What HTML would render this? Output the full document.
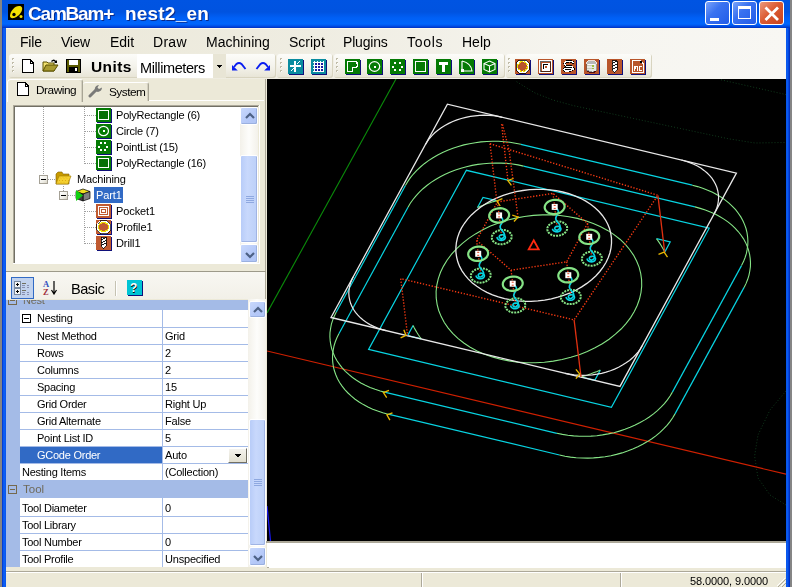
<!DOCTYPE html>
<html><head><meta charset="utf-8">
<style>
*{margin:0;padding:0;box-sizing:border-box}
html,body{width:792px;height:587px;overflow:hidden;background:#ece9d8;font-family:"Liberation Sans",sans-serif;position:relative}
.a{position:absolute}
.t{position:absolute;white-space:pre;line-height:1;color:#000;will-change:transform}
svg{shape-rendering:crispEdges}
</style></head><body>
<div class="a" style="left:0px;top:0px;width:2px;height:587px;background:#858585"></div>
<div class="a" style="left:2px;top:0px;width:4px;height:587px;background:linear-gradient(90deg,#0030c8,#0a5cf2 40%,#0b5ff6 70%,#0a52e6)"></div>
<div class="a" style="left:786px;top:0px;width:4px;height:587px;background:linear-gradient(90deg,#0a52e6,#0b5ff6 30%,#0038d0 80%,#0024a8)"></div>
<div class="a" style="left:790px;top:0px;width:2px;height:587px;background:#858585"></div>
<div class="a" style="left:2px;top:0px;width:788px;height:28px;background:linear-gradient(#0054e2 0,#0053e0 12px,#0060f6 18px,#0066fc 24px,#0050e8 26px,#0030c0 28px)"></div>
<svg class="a" style="left:8px;top:4px;shape-rendering:auto" width="16" height="16" viewBox="0 0 16 16"><rect width="16" height="16" fill="#000"/><path d="M2 12 C2 7 7 2 11 2 C14 2 14.5 4 14 6 C13 10 9 13 6 14 C3 14.5 2 13.5 2 12Z" fill="#f4e000"/><circle cx="6" cy="10.5" r="1.7" fill="#000"/><circle cx="13" cy="12.5" r="1.5" fill="#f4e000"/></svg>
<div class="t" style="left:28px;top:4px;font-size:19px;font-weight:700;color:#fff;letter-spacing:-1.2px;text-shadow:1px 1px 0 #0a2a8a">CamBam+</div>
<div class="t" style="left:125px;top:4px;font-size:19px;font-weight:700;color:#fff;letter-spacing:0.2px;text-shadow:1px 1px 0 #0a2a8a">nest2_en</div>
<div class="a" style="left:705px;top:1px;width:25px;height:24px;border:1px solid #fff;border-radius:3px;background:linear-gradient(135deg,#7aa4fa,#3a72f0 40%,#225ce8)"><div class="a" style="left:4px;top:16px;width:9px;height:3px;background:#fff"></div></div>
<div class="a" style="left:732px;top:1px;width:25px;height:24px;border:1px solid #fff;border-radius:3px;background:linear-gradient(135deg,#7aa4fa,#3a72f0 40%,#225ce8)"><div class="a" style="left:5px;top:4px;width:13px;height:13px;border:1px solid #fff;border-top-width:3px"></div></div>
<div class="a" style="left:759px;top:1px;width:25px;height:24px;border:1px solid #fff;border-radius:3px;background:linear-gradient(135deg,#eb9a7c,#dc5c34 45%,#c8421c)"><svg class="a" style="left:4px;top:4px" width="16" height="16"><path d="M1.5 1.5 L14 14 M14 1.5 L1.5 14" stroke="#fff" stroke-width="2.8" style="shape-rendering:auto"/></svg></div>
<div class="a" style="left:6px;top:28px;width:780px;height:25px;background:linear-gradient(90deg,#ebe8d8,#efede2 40%,#f6f5f0 75%,#f8f7f3)"></div>
<div class="a" style="left:6px;top:28px;width:780px;height:1px;background:#fcf9ec"></div>
<div class="t" style="left:20px;top:35px;font-size:14px;font-weight:400;color:#000;letter-spacing:-0.2px;">File</div>
<div class="t" style="left:61px;top:35px;font-size:14px;font-weight:400;color:#000;letter-spacing:-0.3px;">View</div>
<div class="t" style="left:110px;top:35px;font-size:14px;font-weight:400;color:#000;letter-spacing:0px;">Edit</div>
<div class="t" style="left:153px;top:35px;font-size:14px;font-weight:400;color:#000;letter-spacing:0.3px;">Draw</div>
<div class="t" style="left:206px;top:35px;font-size:14px;font-weight:400;color:#000;letter-spacing:0px;">Machining</div>
<div class="t" style="left:289px;top:35px;font-size:14px;font-weight:400;color:#000;letter-spacing:0px;">Script</div>
<div class="t" style="left:343px;top:35px;font-size:14px;font-weight:400;color:#000;letter-spacing:-0.2px;">Plugins</div>
<div class="t" style="left:407px;top:35px;font-size:14px;font-weight:400;color:#000;letter-spacing:0.7px;">Tools</div>
<div class="t" style="left:462px;top:35px;font-size:14px;font-weight:400;color:#000;letter-spacing:0px;">Help</div>
<div class="a" style="left:6px;top:53px;width:780px;height:26px;background:linear-gradient(90deg,#ebe8d8,#f0eee4 40%,#f6f5f0 75%,#f8f7f3)"></div>
<div class="a" style="left:9px;top:54px;width:267px;height:24px;border-radius:3px 3px 3px 3px;background:linear-gradient(#fcfcf9,#f4f3ec 50%,#e7e4d5);box-shadow:inset -1px -1px 0 #d8d4c0"></div>
<div class="a" style="left:12px;top:58px;width:2px;height:2px;background:#c0bca8"></div>
<div class="a" style="left:13px;top:59px;width:1px;height:1px;background:#fff"></div>
<div class="a" style="left:12px;top:62px;width:2px;height:2px;background:#c0bca8"></div>
<div class="a" style="left:13px;top:63px;width:1px;height:1px;background:#fff"></div>
<div class="a" style="left:12px;top:66px;width:2px;height:2px;background:#c0bca8"></div>
<div class="a" style="left:13px;top:67px;width:1px;height:1px;background:#fff"></div>
<div class="a" style="left:12px;top:70px;width:2px;height:2px;background:#c0bca8"></div>
<div class="a" style="left:13px;top:71px;width:1px;height:1px;background:#fff"></div>
<div class="a" style="left:277px;top:54px;width:56px;height:24px;border-radius:3px 3px 3px 3px;background:linear-gradient(#fcfcf9,#f4f3ec 50%,#e7e4d5);box-shadow:inset -1px -1px 0 #d8d4c0"></div>
<div class="a" style="left:280px;top:58px;width:2px;height:2px;background:#c0bca8"></div>
<div class="a" style="left:281px;top:59px;width:1px;height:1px;background:#fff"></div>
<div class="a" style="left:280px;top:62px;width:2px;height:2px;background:#c0bca8"></div>
<div class="a" style="left:281px;top:63px;width:1px;height:1px;background:#fff"></div>
<div class="a" style="left:280px;top:66px;width:2px;height:2px;background:#c0bca8"></div>
<div class="a" style="left:281px;top:67px;width:1px;height:1px;background:#fff"></div>
<div class="a" style="left:280px;top:70px;width:2px;height:2px;background:#c0bca8"></div>
<div class="a" style="left:281px;top:71px;width:1px;height:1px;background:#fff"></div>
<div class="a" style="left:334px;top:54px;width:171px;height:24px;border-radius:3px 3px 3px 3px;background:linear-gradient(#fcfcf9,#f4f3ec 50%,#e7e4d5);box-shadow:inset -1px -1px 0 #d8d4c0"></div>
<div class="a" style="left:336px;top:58px;width:2px;height:2px;background:#c0bca8"></div>
<div class="a" style="left:337px;top:59px;width:1px;height:1px;background:#fff"></div>
<div class="a" style="left:336px;top:62px;width:2px;height:2px;background:#c0bca8"></div>
<div class="a" style="left:337px;top:63px;width:1px;height:1px;background:#fff"></div>
<div class="a" style="left:336px;top:66px;width:2px;height:2px;background:#c0bca8"></div>
<div class="a" style="left:337px;top:67px;width:1px;height:1px;background:#fff"></div>
<div class="a" style="left:336px;top:70px;width:2px;height:2px;background:#c0bca8"></div>
<div class="a" style="left:337px;top:71px;width:1px;height:1px;background:#fff"></div>
<div class="a" style="left:506px;top:54px;width:146px;height:24px;border-radius:3px 3px 3px 3px;background:linear-gradient(#fcfcf9,#f4f3ec 50%,#e7e4d5);box-shadow:inset -1px -1px 0 #d8d4c0"></div>
<div class="a" style="left:508px;top:58px;width:2px;height:2px;background:#c0bca8"></div>
<div class="a" style="left:509px;top:59px;width:1px;height:1px;background:#fff"></div>
<div class="a" style="left:508px;top:62px;width:2px;height:2px;background:#c0bca8"></div>
<div class="a" style="left:509px;top:63px;width:1px;height:1px;background:#fff"></div>
<div class="a" style="left:508px;top:66px;width:2px;height:2px;background:#c0bca8"></div>
<div class="a" style="left:509px;top:67px;width:1px;height:1px;background:#fff"></div>
<div class="a" style="left:508px;top:70px;width:2px;height:2px;background:#c0bca8"></div>
<div class="a" style="left:509px;top:71px;width:1px;height:1px;background:#fff"></div>
<svg class="a" style="left:22px;top:59px;" width="12" height="14" viewBox="0 0 12 14"><path d="M0.5 0.5 H8 L11.5 4 V13.5 H0.5Z" fill="#fff" stroke="#000"/><path d="M8 0.5 V4 H11.5" fill="none" stroke="#000"/></svg>
<svg class="a" style="left:42px;top:58px;shape-rendering:auto" width="17" height="15" viewBox="0 0 17 15"><path d="M1 4 H5 L6 5 H12 V13 H1Z" fill="#f0e070" stroke="#5a5000"/><path d="M1 13 L4 7 H16 L12 13Z" fill="#a89a30" stroke="#5a5000"/><path d="M9 3 Q12 0 14 3 L15 2 V5 H12 L13 4 Q11.5 2 10 4Z" fill="#000"/></svg>
<svg class="a" style="left:66px;top:59px;" width="15" height="14" viewBox="0 0 15 14"><rect x="0.5" y="0.5" width="14" height="13" fill="#5a5a00" stroke="#000"/><rect x="3" y="1" width="9" height="5" fill="#fff"/><rect x="3" y="8" width="9" height="5" fill="#000"/><rect x="9" y="9" width="2" height="3" fill="#fff"/></svg>
<div class="t" style="left:91px;top:59px;font-size:15.5px;font-weight:700;color:#000;letter-spacing:0.4px;">Units</div>
<div class="a" style="left:137px;top:54px;width:76px;height:24px;background:#fff"></div>
<div class="t" style="left:140px;top:61px;font-size:14.5px;font-weight:400;color:#000;letter-spacing:-0.4px;width:66px;overflow:hidden">Millimeters</div>
<div class="a" style="left:213px;top:54px;width:13px;height:24px;background:#e8e5d5"></div>
<svg class="a" style="left:216px;top:65px;" width="7" height="4" viewBox="0 0 7 4"><path d="M0 0 H6 L3 3Z" fill="#000"/></svg>
<svg class="a" style="left:231px;top:61px;shape-rendering:auto" width="17" height="11" viewBox="0 0 17 11"><path d="M14.5 8 L10.5 3 Q8 0.8 5.5 3 L3 6" fill="none" stroke="#0a1ef0" stroke-width="1.9"/><path d="M1 4 V9.6 H6.8Z" fill="#0a1ef0"/></svg>
<svg class="a" style="left:254px;top:61px;shape-rendering:auto" width="17" height="11" viewBox="0 0 17 11"><path d="M2.5 8 L6.5 3 Q9 0.8 11.5 3 L14 6" fill="none" stroke="#0a1ef0" stroke-width="1.9"/><path d="M16 4 V9.6 H10.2Z" fill="#0a1ef0"/></svg>
<svg class="a" style="left:288px;top:59px;" width="16" height="16" viewBox="0 0 16 16"><rect x="1" y="1" width="15" height="15" fill="#10107a"/><rect x="0" y="0" width="15" height="15" fill="#0a8ca0"/><path d="M7 2 V13 M2 7 H13" stroke="#fff" stroke-width="1.3"/><path d="M9 5 L12 2 M3 12 L6 9" stroke="#fff"/></svg>
<svg class="a" style="left:311px;top:59px;" width="16" height="16" viewBox="0 0 16 16"><rect x="1" y="1" width="15" height="15" fill="#10107a"/><rect x="0" y="0" width="15" height="15" fill="#0a8ca0"/><path d="M3 2 V13 M2 3 H13" stroke="#fff"/><path d="M6 2 V13 M2 6 H13" stroke="#fff"/><path d="M9 2 V13 M2 9 H13" stroke="#fff"/><path d="M12 2 V13 M2 12 H13" stroke="#fff"/><rect x="4" y="4" width="2" height="2" fill="#1a1aa0"/><rect x="4" y="7" width="2" height="2" fill="#1a1aa0"/><rect x="4" y="10" width="2" height="2" fill="#1a1aa0"/><rect x="7" y="4" width="2" height="2" fill="#1a1aa0"/><rect x="7" y="7" width="2" height="2" fill="#1a1aa0"/><rect x="7" y="10" width="2" height="2" fill="#1a1aa0"/><rect x="10" y="4" width="2" height="2" fill="#1a1aa0"/><rect x="10" y="7" width="2" height="2" fill="#1a1aa0"/><rect x="10" y="10" width="2" height="2" fill="#1a1aa0"/></svg>
<svg class="a" style="left:345px;top:59px;" width="16" height="16" viewBox="0 0 16 16"><rect x="1" y="1" width="15" height="15" fill="#10107a"/><rect x="0" y="0" width="15" height="15" fill="#047a04"/><path d="M2.5 2.5 H10 Q12.5 2.5 12.5 6 Q12.5 8.5 9.5 8.5 H7.5 V12.5 H2.5Z" fill="none" stroke="#fff" stroke-width="1.4"/></svg>
<svg class="a" style="left:367px;top:59px;" width="16" height="16" viewBox="0 0 16 16"><rect x="1" y="1" width="15" height="15" fill="#10107a"/><rect x="0" y="0" width="15" height="15" fill="#047a04"/><ellipse cx="7.5" cy="7.5" rx="5.2" ry="4.8" fill="none" stroke="#fff" stroke-width="1.2" style="shape-rendering:auto"/><rect x="6.5" y="6.5" width="2" height="2" fill="#fff"/></svg>
<svg class="a" style="left:390px;top:59px;" width="16" height="16" viewBox="0 0 16 16"><rect x="1" y="1" width="15" height="15" fill="#10107a"/><rect x="0" y="0" width="15" height="15" fill="#047a04"/><rect x="11" y="7" width="2" height="2" fill="#fff"/><rect x="9" y="10" width="2" height="2" fill="#fff"/><rect x="4" y="10" width="2" height="2" fill="#fff"/><rect x="2" y="7" width="2" height="2" fill="#fff"/><rect x="4" y="3" width="2" height="2" fill="#fff"/><rect x="9" y="3" width="2" height="2" fill="#fff"/></svg>
<svg class="a" style="left:413px;top:59px;" width="16" height="16" viewBox="0 0 16 16"><rect x="1" y="1" width="15" height="15" fill="#10107a"/><rect x="0" y="0" width="15" height="15" fill="#047a04"/><rect x="2.5" y="2.5" width="10" height="10" fill="none" stroke="#fff" stroke-width="1.4"/></svg>
<svg class="a" style="left:436px;top:59px;" width="16" height="16" viewBox="0 0 16 16"><rect x="1" y="1" width="15" height="15" fill="#10107a"/><rect x="0" y="0" width="15" height="15" fill="#047a04"/><path d="M3 3 H12 V5.5 H9 V13 H6 V5.5 H3Z" fill="#fff"/></svg>
<svg class="a" style="left:459px;top:59px;" width="16" height="16" viewBox="0 0 16 16"><rect x="1" y="1" width="15" height="15" fill="#10107a"/><rect x="0" y="0" width="15" height="15" fill="#047a04"/><path d="M3 2 V12 H13 Q12 4 3 2" fill="none" stroke="#fff" stroke-width="1.2" style="shape-rendering:auto"/><rect x="2" y="10" width="3" height="3" fill="#fff"/></svg>
<svg class="a" style="left:482px;top:59px;" width="16" height="16" viewBox="0 0 16 16"><rect x="1" y="1" width="15" height="15" fill="#10107a"/><rect x="0" y="0" width="15" height="15" fill="#047a04"/><path d="M7.5 2 L13 4.5 V10.5 L7.5 13 L2 10.5 V4.5Z M2 4.5 L7.5 7 L13 4.5 M7.5 7 V13" fill="none" stroke="#fff" stroke-width="1.1" style="shape-rendering:auto"/></svg>
<svg class="a" style="left:515px;top:59px;" width="16" height="16" viewBox="0 0 16 16"><rect x="1" y="1" width="15" height="15" fill="#10107a"/><rect x="0" y="0" width="15" height="15" fill="#b8552a"/><path d="M4 1 H11 L14 4 V11 L11 14 H4 L1 11 V4Z" fill="#fff" stroke="#000" stroke-width="0.8"/><circle cx="7.5" cy="7.5" r="4.8" fill="#b8552a" stroke="#f0e000" stroke-width="1.3" stroke-dasharray="2 0.6"/></svg>
<svg class="a" style="left:538px;top:59px;" width="16" height="16" viewBox="0 0 16 16"><rect x="1" y="1" width="15" height="15" fill="#10107a"/><rect x="0" y="0" width="15" height="15" fill="#b8552a"/><rect x="1" y="1" width="13" height="13" fill="#fff"/><rect x="2.5" y="2.5" width="10" height="10" fill="#b8552a" stroke="#000" stroke-width="0.6"/><rect x="3.5" y="3.5" width="8" height="8" fill="#fff"/><rect x="5" y="5" width="5" height="5" fill="#000"/><rect x="5.5" y="5.5" width="4" height="4" fill="#fff"/><rect x="6.5" y="6.5" width="2" height="2" fill="#b8552a"/></svg>
<svg class="a" style="left:561px;top:59px;" width="16" height="16" viewBox="0 0 16 16"><rect x="1" y="1" width="15" height="15" fill="#10107a"/><rect x="0" y="0" width="15" height="15" fill="#b8552a"/><path d="M12 3.5 Q10 1.5 6 2.5 Q3 3.5 4 6 Q5 8 9 7.5 Q12 7.5 11.5 9.5 Q10.5 12 6 12 Q3 12 3 10.5 Q4 9 7 9.5 L13 10" fill="none" stroke="#000" stroke-width="2.6" stroke-linecap="round"/><path d="M12 3.5 Q10 1.5 6 2.5 Q3 3.5 4 6 Q5 8 9 7.5 Q12 7.5 11.5 9.5 Q10.5 12 6 12 Q3 12 3 10.5 Q4 9 7 9.5 L13 10" fill="none" stroke="#fff" stroke-width="1.3" stroke-linecap="round"/></svg>
<svg class="a" style="left:584px;top:59px;" width="16" height="16" viewBox="0 0 16 16"><rect x="1" y="1" width="15" height="15" fill="#10107a"/><rect x="0" y="0" width="15" height="15" fill="#b8552a"/><path d="M2.5 3.5 V11.5 Q7.5 14.5 12.5 11.5 V3.5" fill="#e8e8e4" stroke="#606060" stroke-width="0.6"/><ellipse cx="7.5" cy="3.5" rx="5" ry="2" fill="#b8b8b8" stroke="#fff" stroke-width="0.8"/><path d="M3 11.5 Q7.5 14.5 12 11.5 V13 Q7.5 15 3 13Z" fill="#501010"/><path d="M3 6.5 H8 M3 9 H8" stroke="#c0c0b0" stroke-width="0.8"/><rect x="8" y="6" width="1.5" height="1.5" fill="#a0c040"/><rect x="8" y="8.5" width="1.5" height="1.5" fill="#a0c040"/></svg>
<svg class="a" style="left:607px;top:59px;" width="16" height="16" viewBox="0 0 16 16"><rect x="1" y="1" width="15" height="15" fill="#10107a"/><rect x="0" y="0" width="15" height="15" fill="#b8552a"/><path d="M5 1.5 H10 V11 L7.5 14 L5 11Z" fill="#fff" stroke="#000" stroke-width="0.8"/><path d="M5.3 4.3 L9.7 2.3 M5.3 7.3 L9.7 5.3 M5.3 10.3 L9.7 8.3" stroke="#000" stroke-width="0.9"/></svg>
<svg class="a" style="left:630px;top:59px;" width="16" height="16" viewBox="0 0 16 16"><rect x="1" y="1" width="15" height="15" fill="#10107a"/><rect x="0" y="0" width="15" height="15" fill="#b8552a"/><path d="M2.5 1.5 H10 L13 4.5 V13.5 H2.5Z" fill="none" stroke="#fff" stroke-width="1"/><rect x="10" y="2" width="2" height="2" fill="#000"/><rect x="3.5" y="7" width="1" height="5" fill="#fff"/><rect x="7" y="7" width="1" height="5" fill="#fff"/><rect x="4" y="7" width="3" height="1" fill="#fff"/><rect x="5" y="7" width="1" height="3" fill="#fff"/><rect x="9" y="7" width="1" height="5" fill="#fff"/><rect x="9" y="7" width="3" height="1" fill="#fff"/><rect x="9" y="11" width="3" height="1" fill="#fff"/></svg>
<div class="a" style="left:6px;top:79px;width:260px;height:489px;background:#ece9d8"></div>
<div class="a" style="left:265px;top:79px;width:1px;height:463px;background:#aca899"></div>
<div class="a" style="left:83px;top:100px;width:181px;height:1px;background:#fff"></div>
<div class="a" style="left:83px;top:82px;width:66px;height:19px;border-top:1px solid #fff;border-right:1px solid #a8a595;border-radius:3px 3px 0 0;background:#ece9d8;box-shadow:inset -1px 0 0 #d4d0c0"></div>
<div class="a" style="left:7px;top:79px;width:76px;height:23px;border-top:1px solid #fff;border-left:1px solid #fff;border-right:1px solid #a8a595;border-radius:4px 3px 0 0;background:#ece9d8;box-shadow:inset -1px 0 0 #d4d0c0"></div>
<svg class="a" style="left:17px;top:82px;" width="12" height="14" viewBox="0 0 12 14"><path d="M0.5 0.5 H8 L11.5 4 V13.5 H0.5Z" fill="#fff" stroke="#000"/><path d="M8 0.5 V4 H11.5" fill="none" stroke="#000"/></svg>
<div class="t" style="left:36px;top:85px;font-size:11.8px;font-weight:400;color:#000;letter-spacing:-0.45px;">Drawing</div>
<svg class="a" style="left:87px;top:84px;shape-rendering:auto" width="17" height="14" viewBox="0 0 17 14"><path d="M3 12 L9 6" stroke="#7a7a78" stroke-width="3" stroke-linecap="round"/><path d="M8 7 Q7 3 10 1.5 L12 1 L10.5 3.5 L12 5 L15 3.5 Q15 7 11 8Z" fill="#7a7a78"/></svg>
<div class="t" style="left:109px;top:87px;font-size:11.8px;font-weight:400;color:#000;letter-spacing:-0.5px;">System</div>
<div class="a" style="left:13px;top:105px;width:246px;height:1px;background:#aca899"></div>
<div class="a" style="left:13px;top:105px;width:1px;height:158px;background:#aca899"></div>
<div class="a" style="left:14px;top:106px;width:244px;height:1px;background:#716f64"></div>
<div class="a" style="left:14px;top:106px;width:1px;height:157px;background:#716f64"></div>
<div class="a" style="left:13px;top:263px;width:247px;height:1px;background:#fff"></div>
<div class="a" style="left:259px;top:105px;width:1px;height:159px;background:#fff"></div>
<div class="a" style="left:15px;top:107px;width:243px;height:156px;background:#fff"></div>
<div class="a" style="left:240px;top:107px;width:18px;height:156px;background:linear-gradient(90deg,#f3f1ea,#fdfdfb 50%,#f3f1ea)"></div>
<div class="a" style="left:240px;top:107px;width:18px;height:18px;border:1px solid #fff;border-radius:2px;background:linear-gradient(135deg,#c8d8fc,#b4c8f8 60%,#b0c4f4);box-shadow:inset -1px -1px 0 #9ab0e0"><svg class="a" style="left:0px;top:1px;shape-rendering:auto" width="18" height="15"><path d="M5 9 L9 5 L13 9" fill="none" stroke="#4d6185" stroke-width="2.2"/></svg></div>
<div class="a" style="left:240px;top:155px;width:18px;height:88px;border:1px solid #fff;border-radius:2px;background:linear-gradient(90deg,#b8ccf8,#c8d8fc 40%,#bcd0f8);box-shadow:inset -1px -1px 0 #a0b4e4"><div class="a" style="left:5px;top:40px;width:8px;height:1px;background:#8ea8e0"></div><div class="a" style="left:5px;top:42px;width:8px;height:1px;background:#8ea8e0"></div><div class="a" style="left:5px;top:44px;width:8px;height:1px;background:#8ea8e0"></div><div class="a" style="left:5px;top:46px;width:8px;height:1px;background:#8ea8e0"></div></div>
<div class="a" style="left:240px;top:244px;width:18px;height:19px;border:1px solid #fff;border-radius:2px;background:linear-gradient(135deg,#c8d8fc,#b4c8f8 60%,#b0c4f4);box-shadow:inset -1px -1px 0 #9ab0e0"><svg class="a" style="left:0px;top:2px;shape-rendering:auto" width="18" height="15"><path d="M5 6 L9 10 L13 6" fill="none" stroke="#4d6185" stroke-width="2.2"/></svg></div>
<div class="a" style="left:43px;top:107px;width:1px;height:68px;background:repeating-linear-gradient(#a0a0a0 0 1px,transparent 1px 2px)"></div>
<div class="a" style="left:84px;top:107px;width:1px;height:57px;background:repeating-linear-gradient(#a0a0a0 0 1px,transparent 1px 2px)"></div>
<div class="a" style="left:85px;top:115px;width:11px;height:1px;background:repeating-linear-gradient(90deg,#a0a0a0 0 1px,transparent 1px 2px)"></div>
<div class="a" style="left:85px;top:131px;width:11px;height:1px;background:repeating-linear-gradient(90deg,#a0a0a0 0 1px,transparent 1px 2px)"></div>
<div class="a" style="left:85px;top:147px;width:11px;height:1px;background:repeating-linear-gradient(90deg,#a0a0a0 0 1px,transparent 1px 2px)"></div>
<div class="a" style="left:85px;top:163px;width:11px;height:1px;background:repeating-linear-gradient(90deg,#a0a0a0 0 1px,transparent 1px 2px)"></div>
<div class="a" style="left:39px;top:175px;width:9px;height:9px;border:1px solid #a5a196;background:linear-gradient(135deg,#fff,#f0efe8 60%,#d8d4c6)"><div class="a" style="left:1px;top:3px;width:5px;height:1px;background:#000"></div></div>
<div class="a" style="left:48px;top:179px;width:7px;height:1px;background:repeating-linear-gradient(90deg,#a0a0a0 0 1px,transparent 1px 2px)"></div>
<div class="a" style="left:63px;top:186px;width:1px;height:5px;background:repeating-linear-gradient(#a0a0a0 0 1px,transparent 1px 2px)"></div>
<div class="a" style="left:59px;top:191px;width:9px;height:9px;border:1px solid #a5a196;background:linear-gradient(135deg,#fff,#f0efe8 60%,#d8d4c6)"><div class="a" style="left:1px;top:3px;width:5px;height:1px;background:#000"></div></div>
<div class="a" style="left:68px;top:195px;width:7px;height:1px;background:repeating-linear-gradient(90deg,#a0a0a0 0 1px,transparent 1px 2px)"></div>
<div class="a" style="left:84px;top:203px;width:1px;height:41px;background:repeating-linear-gradient(#a0a0a0 0 1px,transparent 1px 2px)"></div>
<div class="a" style="left:85px;top:211px;width:11px;height:1px;background:repeating-linear-gradient(90deg,#a0a0a0 0 1px,transparent 1px 2px)"></div>
<div class="a" style="left:85px;top:227px;width:11px;height:1px;background:repeating-linear-gradient(90deg,#a0a0a0 0 1px,transparent 1px 2px)"></div>
<div class="a" style="left:85px;top:243px;width:11px;height:1px;background:repeating-linear-gradient(90deg,#a0a0a0 0 1px,transparent 1px 2px)"></div>
<svg class="a" style="left:96px;top:108px;" width="16" height="15" viewBox="0 0 16 15"><rect x="1" y="1" width="15" height="14" fill="#10107a"/><rect x="0" y="0" width="15" height="14" fill="#047a04"/><rect x="2.5" y="2.5" width="10" height="9" fill="#057005" stroke="#fff" stroke-width="1.2"/></svg>
<svg class="a" style="left:96px;top:124px;" width="16" height="15" viewBox="0 0 16 15"><rect x="1" y="1" width="15" height="14" fill="#10107a"/><rect x="0" y="0" width="15" height="14" fill="#047a04"/><ellipse cx="7.5" cy="7" rx="5" ry="4.6" fill="none" stroke="#fff" stroke-width="1.2" style="shape-rendering:auto"/><rect x="6.5" y="6" width="2" height="2" fill="#fff"/></svg>
<svg class="a" style="left:96px;top:140px;" width="16" height="15" viewBox="0 0 16 15"><rect x="1" y="1" width="15" height="14" fill="#10107a"/><rect x="0" y="0" width="15" height="14" fill="#047a04"/><rect x="10" y="6" width="2" height="2" fill="#fff"/><rect x="8" y="9" width="2" height="2" fill="#fff"/><rect x="4" y="9" width="2" height="2" fill="#fff"/><rect x="2" y="6" width="2" height="2" fill="#fff"/><rect x="4" y="2" width="2" height="2" fill="#fff"/><rect x="8" y="2" width="2" height="2" fill="#fff"/></svg>
<svg class="a" style="left:96px;top:156px;" width="16" height="15" viewBox="0 0 16 15"><rect x="1" y="1" width="15" height="14" fill="#10107a"/><rect x="0" y="0" width="15" height="14" fill="#047a04"/><rect x="2.5" y="2.5" width="10" height="9" fill="#057005" stroke="#fff" stroke-width="1.2"/></svg>
<div class="t" style="left:116px;top:110px;font-size:11px;font-weight:400;color:#000;letter-spacing:-0.2px;">PolyRectangle (6)</div>
<div class="t" style="left:116px;top:126px;font-size:11px;font-weight:400;color:#000;letter-spacing:-0.2px;">Circle (7)</div>
<div class="t" style="left:116px;top:142px;font-size:11px;font-weight:400;color:#000;letter-spacing:-0.2px;">PointList (15)</div>
<div class="t" style="left:116px;top:158px;font-size:11px;font-weight:400;color:#000;letter-spacing:-0.2px;">PolyRectangle (16)</div>
<svg class="a" style="left:55px;top:171px;shape-rendering:auto" width="17" height="15" viewBox="0 0 17 15"><path d="M1 3 L3 1 H7 L8 3 H14 V13 H1Z" fill="#c89a00" stroke="#806000" stroke-width="0.6"/><path d="M1 13 L4 5 H16 L13 13Z" fill="#f4d030" stroke="#a07800" stroke-width="0.6"/><path d="M5 6.5 L6 7.5 M8 6.5 L9 7.5 M11 6.5 L12 7.5 M4 9 L5 10 M7 9 L8 10 M10 9 L11 10 M13 9 L14 10 M3 11.5 L4 12.5 M6 11.5 L7 12.5 M9 11.5 L10 12.5" stroke="#d8a010" stroke-width="0.8"/></svg>
<div class="t" style="left:77px;top:174px;font-size:11px;font-weight:400;color:#000;letter-spacing:-0.15px;">Machining</div>
<svg class="a" style="left:75px;top:188px;shape-rendering:auto" width="16" height="14" viewBox="0 0 16 14"><path d="M8 1 L15 3.5 L8 6 L1 3.5Z" fill="#f0e020" stroke="#000" stroke-width="0.7"/><path d="M8 6 L15 3.5 V10.5 L8 13Z" fill="#808080" stroke="#000" stroke-width="0.7"/><path d="M1 3.5 L8 6 V13 L1 10.5Z" fill="#404040" stroke="#000" stroke-width="0.7"/><path d="M1 2 L8 7.5 L1 13Z" fill="#10d010"/></svg>
<div class="a" style="left:94px;top:187px;width:29px;height:16px;background:#316ac5"></div>
<div class="t" style="left:96px;top:190px;font-size:11px;font-weight:400;color:#fff;letter-spacing:-0.1px;">Part1</div>
<svg class="a" style="left:96px;top:204px;" width="16" height="15" viewBox="0 0 16 15"><rect x="1" y="1" width="15" height="14" fill="#10107a"/><rect x="0" y="0" width="15" height="14" fill="#c05a30"/><rect x="1.5" y="1.5" width="12" height="11" fill="#fff" stroke="#c05a30"/><rect x="3.5" y="3.5" width="8" height="7" fill="none" stroke="#c05a30"/><rect x="5.5" y="5.5" width="4" height="3" fill="none" stroke="#c05a30"/></svg>
<svg class="a" style="left:96px;top:220px;" width="16" height="15" viewBox="0 0 16 15"><rect x="1" y="1" width="15" height="14" fill="#10107a"/><rect x="0" y="0" width="15" height="14" fill="#c05a30"/><path d="M4 0.5 H11 L14.5 4 V10 L11 13.5 H4 L0.5 10 V4Z" fill="#fff" stroke="#000" stroke-width="0.7"/><ellipse cx="7.5" cy="7" rx="5" ry="4.6" fill="#c05a30" stroke="#f0e000" stroke-width="1.3"/></svg>
<svg class="a" style="left:96px;top:236px;" width="16" height="15" viewBox="0 0 16 15"><rect x="1" y="1" width="15" height="14" fill="#10107a"/><rect x="0" y="0" width="15" height="14" fill="#c05a30"/><path d="M5 1 H10 V10 L7.5 13 L5 10Z" fill="#fff" stroke="#000" stroke-width="0.8"/><path d="M5.3 3.8 L9.7 1.8 M5.3 6.6 L9.7 4.6 M5.3 9.4 L9.7 7.4" stroke="#000" stroke-width="0.9"/></svg>
<div class="t" style="left:116px;top:206px;font-size:11px;font-weight:400;color:#000;letter-spacing:-0.1px;">Pocket1</div>
<div class="t" style="left:116px;top:222px;font-size:11px;font-weight:400;color:#000;letter-spacing:-0.1px;">Profile1</div>
<div class="t" style="left:116px;top:238px;font-size:11px;font-weight:400;color:#000;letter-spacing:-0.1px;">Drill1</div>
<div class="a" style="left:6px;top:271px;width:260px;height:1px;background:#9d9a8a"></div>
<div class="a" style="left:6px;top:272px;width:259px;height:27px;background:linear-gradient(#f8f7f2,#f2f0e8)"></div>
<div class="a" style="left:11px;top:277px;width:23px;height:22px;border:1px solid #316ac5;background:#c1d2ee"></div>
<svg class="a" style="left:14px;top:280px;" width="17" height="16" viewBox="0 0 17 16"><rect x="0.5" y="1.5" width="6" height="6" fill="#f4f4f4" stroke="#7a8aa0"/><path d="M2 4.5 H5 M3.5 3 V6" stroke="#000"/><rect x="0.5" y="8.5" width="6" height="6" fill="#f4f4f4" stroke="#7a8aa0"/><path d="M2 11.5 H5 M3.5 10 V13" stroke="#000"/><path d="M8 3 H12 M8 5 H11 M13 5 H15 M8 7 H11 M13 7 H15 M8 10 H12 M8 12 H11 M13 12 H15 M8 14 H11 M13 14 H15" stroke="#8890b0"/><path d="M8 3 H12 M8 10 H12" stroke="#707060"/></svg>
<svg class="a" style="left:42px;top:280px;shape-rendering:auto" width="17" height="15" viewBox="0 0 17 15"><text x="1" y="7" font-family="Liberation Serif" font-size="8.5" font-weight="700" fill="#3050c0">A</text><text x="1" y="15" font-family="Liberation Serif" font-size="8.5" font-weight="700" fill="#a03040">Z</text><path d="M12 1 V13 M9.5 10 L12 14 L14.5 10" fill="none" stroke="#000" stroke-width="1.2"/></svg>
<div class="t" style="left:71px;top:282px;font-size:14.6px;font-weight:400;color:#000;letter-spacing:-0.5px;">Basic</div>
<div class="a" style="left:115px;top:281px;width:1px;height:15px;background:#c5c2b2"></div>
<div class="a" style="left:116px;top:281px;width:1px;height:15px;background:#fff"></div>
<svg class="a" style="left:127px;top:280px;shape-rendering:auto" width="16" height="16" viewBox="0 0 16 16"><rect x="1" y="1" width="15" height="15" fill="#10107a"/><rect x="0" y="0" width="15" height="15" fill="#00c4d4"/><text x="3.5" y="12.5" font-family="Liberation Sans" font-size="12" font-weight="700" fill="#000">?</text><text x="3" y="12" font-family="Liberation Sans" font-size="12" font-weight="700" fill="#fff">?</text></svg>
<div class="a" style="left:6px;top:300px;width:242px;height:267px;background:#a4bbe7"></div>
<div class="a" style="left:6px;top:300px;width:242px;height:10px;overflow:hidden;background:#a4bbe7"><div class="a" style="left:2px;top:-4px;width:9px;height:9px;border:1px solid #75694d"><div class="a" style="left:1px;top:3px;width:5px;height:1px;background:#75694d"></div></div><div class="t" style="left:16.5px;top:-5px;font-size:11px;color:#6f6a5a;letter-spacing:-0.3px">Nest</div></div>
<div class="a" style="left:20px;top:310px;width:228px;height:17px;background:#fff"></div>
<div class="a" style="left:162px;top:310px;width:1px;height:17px;background:#a4bbe7"></div>
<div class="a" style="left:22px;top:314px;width:9px;height:9px;border:1px solid #000"><div class="a" style="left:1px;top:3px;width:5px;height:1px;background:#000"></div></div>
<div class="t" style="left:37px;top:313px;font-size:11px;font-weight:400;color:#000;letter-spacing:-0.25px;">Nesting</div>
<div class="a" style="left:20px;top:328px;width:228px;height:16px;background:#fff"></div>
<div class="a" style="left:162px;top:328px;width:1px;height:16px;background:#a4bbe7"></div>
<div class="t" style="left:37px;top:331px;font-size:11px;font-weight:400;color:#000;letter-spacing:-0.25px;">Nest Method</div>
<div class="t" style="left:165px;top:331px;font-size:11px;font-weight:400;color:#000;letter-spacing:-0.2px;">Grid</div>
<div class="a" style="left:20px;top:345px;width:228px;height:16px;background:#fff"></div>
<div class="a" style="left:162px;top:345px;width:1px;height:16px;background:#a4bbe7"></div>
<div class="t" style="left:37px;top:348px;font-size:11px;font-weight:400;color:#000;letter-spacing:-0.25px;">Rows</div>
<div class="t" style="left:165px;top:348px;font-size:11px;font-weight:400;color:#000;letter-spacing:-0.2px;">2</div>
<div class="a" style="left:20px;top:362px;width:228px;height:16px;background:#fff"></div>
<div class="a" style="left:162px;top:362px;width:1px;height:16px;background:#a4bbe7"></div>
<div class="t" style="left:37px;top:365px;font-size:11px;font-weight:400;color:#000;letter-spacing:-0.25px;">Columns</div>
<div class="t" style="left:165px;top:365px;font-size:11px;font-weight:400;color:#000;letter-spacing:-0.2px;">2</div>
<div class="a" style="left:20px;top:379px;width:228px;height:16px;background:#fff"></div>
<div class="a" style="left:162px;top:379px;width:1px;height:16px;background:#a4bbe7"></div>
<div class="t" style="left:37px;top:382px;font-size:11px;font-weight:400;color:#000;letter-spacing:-0.25px;">Spacing</div>
<div class="t" style="left:165px;top:382px;font-size:11px;font-weight:400;color:#000;letter-spacing:-0.2px;">15</div>
<div class="a" style="left:20px;top:396px;width:228px;height:16px;background:#fff"></div>
<div class="a" style="left:162px;top:396px;width:1px;height:16px;background:#a4bbe7"></div>
<div class="t" style="left:37px;top:399px;font-size:11px;font-weight:400;color:#000;letter-spacing:-0.25px;">Grid Order</div>
<div class="t" style="left:165px;top:399px;font-size:11px;font-weight:400;color:#000;letter-spacing:-0.2px;">Right Up</div>
<div class="a" style="left:20px;top:413px;width:228px;height:16px;background:#fff"></div>
<div class="a" style="left:162px;top:413px;width:1px;height:16px;background:#a4bbe7"></div>
<div class="t" style="left:37px;top:416px;font-size:11px;font-weight:400;color:#000;letter-spacing:-0.25px;">Grid Alternate</div>
<div class="t" style="left:165px;top:416px;font-size:11px;font-weight:400;color:#000;letter-spacing:-0.2px;">False</div>
<div class="a" style="left:20px;top:430px;width:228px;height:16px;background:#fff"></div>
<div class="a" style="left:162px;top:430px;width:1px;height:16px;background:#a4bbe7"></div>
<div class="t" style="left:37px;top:433px;font-size:11px;font-weight:400;color:#000;letter-spacing:-0.25px;">Point List ID</div>
<div class="t" style="left:165px;top:433px;font-size:11px;font-weight:400;color:#000;letter-spacing:-0.2px;">5</div>
<div class="a" style="left:20px;top:447px;width:228px;height:16px;background:#fff"></div>
<div class="a" style="left:20px;top:447px;width:142px;height:16px;background:#316ac5"></div>
<div class="a" style="left:162px;top:447px;width:1px;height:16px;background:#a4bbe7"></div>
<div class="t" style="left:37px;top:450px;font-size:11px;font-weight:400;color:#fff;letter-spacing:-0.25px;">GCode Order</div>
<div class="t" style="left:165px;top:450px;font-size:11px;font-weight:400;color:#000;letter-spacing:-0.2px;">Auto</div>
<div class="a" style="left:20px;top:464px;width:228px;height:16px;background:#fff"></div>
<div class="a" style="left:162px;top:464px;width:1px;height:16px;background:#a4bbe7"></div>
<div class="t" style="left:22px;top:467px;font-size:11px;font-weight:400;color:#000;letter-spacing:-0.25px;">Nesting Items</div>
<div class="t" style="left:165px;top:467px;font-size:11px;font-weight:400;color:#000;letter-spacing:-0.2px;">(Collection)</div>
<div class="a" style="left:228px;top:448px;width:19px;height:15px;border:1px solid;border-color:#fff #716f64 #716f64 #fff;background:linear-gradient(#f4f3ee,#e2dfd0)"><svg class="a" style="left:5px;top:5px" width="7" height="4"><path d="M0 0 H7 L3.5 3.5Z" fill="#000"/></svg></div>
<div class="a" style="left:8px;top:485px;width:9px;height:9px;border:1px solid #75694d"><div class="a" style="left:1px;top:3px;width:5px;height:1px;background:#75694d"></div></div>
<div class="t" style="left:23px;top:484px;font-size:11.5px;font-weight:400;color:#6f6a5a;letter-spacing:0px;">Tool</div>
<div class="a" style="left:20px;top:498px;width:228px;height:18px;background:#fff"></div>
<div class="a" style="left:162px;top:498px;width:1px;height:18px;background:#a4bbe7"></div>
<div class="t" style="left:22px;top:503px;font-size:11px;font-weight:400;color:#000;letter-spacing:-0.25px;">Tool Diameter</div>
<div class="t" style="left:165px;top:503px;font-size:11px;font-weight:400;color:#000;letter-spacing:-0.2px;">0</div>
<div class="a" style="left:20px;top:517px;width:228px;height:16px;background:#fff"></div>
<div class="a" style="left:162px;top:517px;width:1px;height:16px;background:#a4bbe7"></div>
<div class="t" style="left:22px;top:520px;font-size:11px;font-weight:400;color:#000;letter-spacing:-0.25px;">Tool Library</div>
<div class="a" style="left:20px;top:534px;width:228px;height:16px;background:#fff"></div>
<div class="a" style="left:162px;top:534px;width:1px;height:16px;background:#a4bbe7"></div>
<div class="t" style="left:22px;top:537px;font-size:11px;font-weight:400;color:#000;letter-spacing:-0.25px;">Tool Number</div>
<div class="t" style="left:165px;top:537px;font-size:11px;font-weight:400;color:#000;letter-spacing:-0.2px;">0</div>
<div class="a" style="left:20px;top:551px;width:228px;height:16px;background:#fff"></div>
<div class="a" style="left:162px;top:551px;width:1px;height:16px;background:#a4bbe7"></div>
<div class="t" style="left:22px;top:554px;font-size:11px;font-weight:400;color:#000;letter-spacing:-0.25px;">Tool Profile</div>
<div class="t" style="left:165px;top:554px;font-size:11px;font-weight:400;color:#000;letter-spacing:-0.2px;">Unspecified</div>
<div class="a" style="left:248px;top:299px;width:18px;height:268px;background:linear-gradient(90deg,#f3f1ea,#fdfdfb 50%,#f3f1ea)"></div>
<div class="a" style="left:249px;top:301px;width:17px;height:17px;border:1px solid #fff;border-radius:2px;background:linear-gradient(135deg,#c8d8fc,#b4c8f8 60%,#b0c4f4);box-shadow:inset -1px -1px 0 #9ab0e0"><svg class="a" style="left:-1px;top:1px;shape-rendering:auto" width="18" height="15"><path d="M5 9 L9 5 L13 9" fill="none" stroke="#4d6185" stroke-width="2.2"/></svg></div>
<div class="a" style="left:249px;top:419px;width:17px;height:127px;border:1px solid #fff;border-radius:2px;background:linear-gradient(90deg,#b8ccf8,#c8d8fc 40%,#bcd0f8);box-shadow:inset -1px -1px 0 #a0b4e4"><div class="a" style="left:4px;top:59px;width:8px;height:1px;background:#8ea8e0"></div><div class="a" style="left:4px;top:61px;width:8px;height:1px;background:#8ea8e0"></div><div class="a" style="left:4px;top:63px;width:8px;height:1px;background:#8ea8e0"></div><div class="a" style="left:4px;top:65px;width:8px;height:1px;background:#8ea8e0"></div></div>
<div class="a" style="left:249px;top:547px;width:17px;height:19px;border:1px solid #fff;border-radius:2px;background:linear-gradient(135deg,#c8d8fc,#b4c8f8 60%,#b0c4f4);box-shadow:inset -1px -1px 0 #9ab0e0"><svg class="a" style="left:-1px;top:2px;shape-rendering:auto" width="18" height="15"><path d="M5 6 L9 10 L13 6" fill="none" stroke="#4d6185" stroke-width="2.2"/></svg></div>
<div class="a" style="left:266px;top:541px;width:520px;height:2px;background:#aca899"></div>
<div class="a" style="left:267px;top:543px;width:519px;height:26px;background:#fff"></div>
<div class="a" style="left:267px;top:567px;width:2px;height:2px;background:#aca899"></div>
<div class="a" style="left:6px;top:568px;width:780px;height:19px;background:#ece9d8"></div>
<div class="a" style="left:6px;top:571px;width:780px;height:1px;background:#aca899"></div>
<div class="a" style="left:6px;top:572px;width:780px;height:1px;background:#fff"></div>
<div class="a" style="left:421px;top:573px;width:1px;height:14px;background:#aca899"></div>
<div class="a" style="left:422px;top:573px;width:1px;height:14px;background:#fff"></div>
<div class="a" style="left:620px;top:573px;width:1px;height:14px;background:#aca899"></div>
<div class="a" style="left:621px;top:573px;width:1px;height:14px;background:#fff"></div>
<div class="t" style="left:690px;top:576px;font-size:11px;font-weight:400;color:#000;letter-spacing:-0.1px;">58.0000, 9.0000</div>
<svg class="a" style="left:773px;top:574px;shape-rendering:auto" width="13" height="13" viewBox="0 0 13 13"><path d="M12 12 L12 12" stroke="#fff" stroke-width="1"/><path d="M13 13 L13 13" stroke="#aca899"/><path d="M8 12 L12 8" stroke="#fff" stroke-width="1"/><path d="M9 13 L13 9" stroke="#aca899"/><path d="M4 12 L12 4" stroke="#fff" stroke-width="1"/><path d="M5 13 L13 5" stroke="#aca899"/></svg>
<div class="a" style="left:267px;top:79px;width:519px;height:462px;background:#000;overflow:hidden"><svg width="519" height="462" style="position:absolute;left:0;top:0;shape-rendering:auto"><polyline points="249.6,2.7 268.0,14.0 286.0,21.0 306.7,26.7 461.6,59.8 488.0,64.0 519.0,63.5" fill="none" stroke="#103a1c" stroke-width="1" stroke-dasharray="1 2" opacity="1"/><polyline points="454.0,0.8 519.0,15.6" fill="none" stroke="#103a1c" stroke-width="1" stroke-dasharray="1 2" opacity="1"/><polyline points="519.0,312.0 503.0,331.0 491.0,356.0 487.6,377.0 491.0,399.0 503.0,416.0 519.0,426.0" fill="none" stroke="#103a1c" stroke-width="1" stroke-dasharray="1 2" opacity="1"/><polyline points="129.0,0.0 0.0,234.0" fill="none" stroke="#0a8c0a" stroke-width="1.1" opacity="1"/><polyline points="0.0,272.0 519.0,395.2" fill="none" stroke="#d02000" stroke-width="1.2" opacity="1"/><polyline points="0.0,427.0 3.5,462.0" fill="none" stroke="#1818f0" stroke-width="1.3" opacity="1"/><polyline points="256.5,87.1 427.9,127.9" fill="none" stroke="#08d4e2" stroke-width="1.2" opacity="1"/><polyline points="477.1,208.4 408.0,334.9" fill="none" stroke="#08d4e2" stroke-width="1.2" opacity="1"/><polyline points="292.5,376.0 121.1,335.2" fill="none" stroke="#08d4e2" stroke-width="1.2" opacity="1"/><polyline points="71.9,254.7 141.0,128.2" fill="none" stroke="#08d4e2" stroke-width="1.2" opacity="1"/><polyline points="477.1,208.4 479.1,204.4 480.7,200.3 482.0,196.1 482.8,192.0 483.4,187.8 483.5,183.6 483.2,179.5 482.6,175.3 481.6,171.3 480.2,167.3 478.5,163.4 476.4,159.6 473.9,156.0 471.2,152.5 468.0,149.1 464.6,145.9 460.9,142.9 456.9,140.1 452.6,137.5 448.1,135.1 443.3,132.9 438.3,131.0 433.2,129.4 427.9,127.9" fill="none" stroke="#86e486" stroke-width="1.1" opacity="1"/><polyline points="256.5,87.1 251.0,85.9 245.5,85.0 239.8,84.4 234.1,84.1 228.3,84.0 222.5,84.2 216.6,84.7 210.9,85.4 205.1,86.4 199.5,87.7 194.0,89.2 188.5,91.0 183.3,93.0 178.2,95.3 173.3,97.8 168.6,100.5 164.1,103.4 159.9,106.5 156.0,109.7 152.4,113.2 149.0,116.8 146.0,120.5 143.3,124.3 141.0,128.2" fill="none" stroke="#86e486" stroke-width="1.1" opacity="1"/><polyline points="71.9,254.7 69.9,258.7 68.3,262.8 67.0,267.0 66.2,271.1 65.6,275.3 65.5,279.5 65.8,283.6 66.4,287.8 67.4,291.8 68.8,295.8 70.5,299.7 72.6,303.5 75.1,307.1 77.8,310.6 81.0,314.0 84.4,317.2 88.1,320.2 92.1,323.0 96.4,325.6 100.9,328.0 105.7,330.2 110.7,332.1 115.8,333.7 121.1,335.2" fill="none" stroke="#86e486" stroke-width="1.1" opacity="1"/><polyline points="292.5,376.0 298.0,377.2 303.5,378.1 309.2,378.7 314.9,379.0 320.7,379.1 326.5,378.9 332.4,378.4 338.1,377.7 343.9,376.7 349.5,375.4 355.0,373.9 360.5,372.1 365.7,370.1 370.8,367.8 375.7,365.3 380.4,362.6 384.9,359.7 389.1,356.6 393.0,353.4 396.6,349.9 400.0,346.3 403.0,342.6 405.7,338.8 408.0,334.9" fill="none" stroke="#86e486" stroke-width="1.1" opacity="1"/><polyline points="253.9,65.3 425.3,106.2" fill="none" stroke="#08d4e2" stroke-width="1.2" opacity="1"/><polyline points="474.5,186.6 405.4,313.1" fill="none" stroke="#08d4e2" stroke-width="1.2" opacity="1"/><polyline points="289.9,354.3 118.5,313.4" fill="none" stroke="#08d4e2" stroke-width="1.2" opacity="1"/><polyline points="69.3,233.0 138.4,106.5" fill="none" stroke="#08d4e2" stroke-width="1.2" opacity="1"/><polyline points="474.5,186.6 476.5,182.6 478.1,178.5 479.4,174.4 480.2,170.2 480.8,166.0 480.9,161.9 480.6,157.7 480.0,153.6 479.0,149.5 477.6,145.6 475.9,141.7 473.8,137.9 471.3,134.2 468.6,130.7 465.4,127.3 462.0,124.2 458.3,121.1 454.3,118.3 450.0,115.7 445.5,113.3 440.7,111.2 435.7,109.3 430.6,107.6 425.3,106.2" fill="none" stroke="#86e486" stroke-width="1.1" opacity="1"/><polyline points="253.9,65.3 248.4,64.2 242.9,63.3 237.2,62.7 231.5,62.3 225.7,62.3 219.9,62.5 214.0,62.9 208.3,63.7 202.5,64.7 196.9,65.9 191.4,67.5 185.9,69.3 180.7,71.3 175.6,73.5 170.7,76.0 166.0,78.7 161.5,81.6 157.3,84.7 153.4,88.0 149.8,91.4 146.4,95.0 143.4,98.7 140.7,102.6 138.4,106.5" fill="none" stroke="#86e486" stroke-width="1.1" opacity="1"/><polyline points="69.3,233.0 67.3,237.0 65.7,241.1 64.4,245.2 63.6,249.4 63.0,253.6 62.9,257.7 63.2,261.9 63.8,266.0 64.8,270.1 66.2,274.0 67.9,277.9 70.0,281.7 72.5,285.4 75.2,288.9 78.4,292.3 81.8,295.4 85.5,298.5 89.5,301.3 93.8,303.9 98.3,306.3 103.1,308.4 108.1,310.3 113.2,312.0 118.5,313.4" fill="none" stroke="#86e486" stroke-width="1.1" opacity="1"/><polyline points="289.9,354.3 295.4,355.4 300.9,356.3 306.6,356.9 312.3,357.3 318.1,357.3 323.9,357.1 329.8,356.7 335.5,355.9 341.3,354.9 346.9,353.7 352.4,352.1 357.9,350.3 363.1,348.3 368.2,346.1 373.1,343.6 377.8,340.9 382.3,338.0 386.5,334.9 390.4,331.6 394.0,328.2 397.4,324.6 400.4,320.9 403.1,317.0 405.4,313.1" fill="none" stroke="#86e486" stroke-width="1.1" opacity="1"/><polygon points="101.6,270.4 344.4,328.3 442.2,149.2 199.4,91.3" fill="none" stroke="#08d4e2" stroke-width="1.2" opacity="1"/><polyline points="367.3,232.5 370.3,226.3 372.5,220.0 374.0,213.5 374.7,207.1 374.6,200.7 373.7,194.3 372.1,188.1 369.6,182.0 366.5,176.1 362.6,170.5 358.1,165.2 352.9,160.2 347.0,155.6 340.6,151.4 333.7,147.7 326.3,144.4 318.5,141.7 310.3,139.4 301.9,137.7 293.2,136.5 284.3,135.9 275.4,135.9 266.4,136.4 257.5,137.5 248.7,139.1 240.0,141.3 231.6,143.9 223.5,147.1 215.8,150.8 208.5,154.9 201.7,159.4 195.4,164.4 189.7,169.6 184.6,175.2 180.2,181.0 176.5,187.1 173.5,193.3 171.3,199.6 169.8,206.1 169.1,212.5 169.2,218.9 170.1,225.3 171.7,231.5 174.2,237.6 177.3,243.5 181.2,249.1 185.7,254.4 190.9,259.4 196.8,264.0 203.2,268.2 210.1,271.9 217.5,275.2 225.3,277.9 233.5,280.2 241.9,281.9 250.6,283.1 259.5,283.7 268.4,283.7 277.4,283.2 286.3,282.1 295.1,280.5 303.8,278.3 312.2,275.7 320.3,272.5 328.0,268.8 335.3,264.7 342.1,260.2 348.4,255.2 354.1,250.0 359.2,244.4 363.6,238.6 367.3,232.5" fill="none" stroke="#86e486" stroke-width="1.1" opacity="1"/><polyline points="229.7,121.6 216.0,118.4 210.5,128.5" fill="none" stroke="#08d4e2" stroke-width="1.2" opacity="1"/><polyline points="229.7,121.6 226.4,122.6 223.1,123.7 219.9,124.8 216.7,126.0 213.6,127.2 210.5,128.5" fill="none" stroke="#86e486" stroke-width="1.1" opacity="1"/><polyline points="389.5,159.7 403.2,163.0 397.7,173.1" fill="none" stroke="#08d4e2" stroke-width="1.2" opacity="1"/><polyline points="389.5,159.7 391.1,161.9 392.6,164.1 394.0,166.3 395.3,168.5 396.6,170.8 397.7,173.1" fill="none" stroke="#86e486" stroke-width="1.1" opacity="1"/><polyline points="314.1,298.0 327.8,301.2 333.3,291.1" fill="none" stroke="#08d4e2" stroke-width="1.2" opacity="1"/><polyline points="314.1,298.0 317.4,297.0 320.7,295.9 323.9,294.8 327.1,293.6 330.2,292.4 333.3,291.1" fill="none" stroke="#86e486" stroke-width="1.1" opacity="1"/><polyline points="154.3,259.9 140.6,256.6 146.1,246.5" fill="none" stroke="#08d4e2" stroke-width="1.2" opacity="1"/><polyline points="154.3,259.9 152.7,257.7 151.2,255.5 149.8,253.3 148.5,251.1 147.2,248.8 146.1,246.5" fill="none" stroke="#86e486" stroke-width="1.1" opacity="1"/><polygon points="64.0,238.5 353.0,307.4 469.4,94.1 180.4,25.2" fill="none" stroke="#e8e8e8" stroke-width="1.3" opacity="1"/><polyline points="235.3,38.3 230.9,37.4 226.4,36.7 221.9,36.4 217.3,36.2 212.6,36.4 208.0,36.8 203.4,37.4 198.8,38.3 194.3,39.5 190.0,40.9 185.8,42.5 181.8,44.4 177.9,46.5 174.3,48.8 170.9,51.2 167.8,53.8 165.0,56.6 162.4,59.5 160.2,62.6 158.3,65.7" fill="none" stroke="#e8e8e8" stroke-width="1.2" opacity="1"/><polyline points="447.3,134.6 448.8,131.4 450.1,128.1 450.9,124.8 451.4,121.5 451.6,118.1 451.3,114.8 450.7,111.5 449.8,108.3 448.5,105.2 446.8,102.1 444.9,99.2 442.5,96.4 439.9,93.8 437.0,91.4 433.8,89.1 430.4,87.0 426.7,85.2 422.8,83.6 418.7,82.2 414.5,81.0" fill="none" stroke="#e8e8e8" stroke-width="1.2" opacity="1"/><polyline points="86.1,198.0 84.6,201.2 83.3,204.5 82.5,207.8 82.0,211.1 81.8,214.5 82.1,217.8 82.7,221.1 83.6,224.3 84.9,227.4 86.6,230.5 88.5,233.4 90.9,236.2 93.5,238.8 96.4,241.2 99.6,243.5 103.0,245.6 106.7,247.4 110.6,249.0 114.7,250.4 118.9,251.6" fill="none" stroke="#e8e8e8" stroke-width="1.2" opacity="1"/><polyline points="298.1,294.3 302.5,295.2 307.0,295.9 311.5,296.2 316.1,296.4 320.8,296.2 325.4,295.8 330.0,295.2 334.6,294.3 339.1,293.1 343.4,291.7 347.6,290.1 351.6,288.2 355.5,286.1 359.1,283.8 362.5,281.4 365.6,278.8 368.4,276.0 371.0,273.1 373.2,270.0 375.1,266.9" fill="none" stroke="#e8e8e8" stroke-width="1.2" opacity="1"/><polyline points="339.0,183.5 341.2,178.8 342.9,174.0 344.0,169.1 344.5,164.2 344.5,159.4 343.8,154.6 342.6,149.8 340.8,145.2 338.4,140.8 335.4,136.5 332.0,132.5 328.0,128.7 323.6,125.3 318.8,122.1 313.5,119.3 307.9,116.8 302.0,114.7 295.8,113.0 289.4,111.7 282.8,110.8 276.1,110.3 269.3,110.3 262.5,110.7 255.8,111.5 249.1,112.7 242.6,114.4 236.2,116.4 230.1,118.8 224.2,121.6 218.7,124.7 213.5,128.2 208.8,131.9 204.4,135.9 200.6,140.1 197.3,144.5 194.4,149.1 192.2,153.8 190.5,158.6 189.4,163.5 188.9,168.4 188.9,173.2 189.6,178.0 190.8,182.8 192.6,187.4 195.0,191.8 198.0,196.1 201.4,200.1 205.4,203.9 209.8,207.3 214.6,210.5 219.9,213.3 225.5,215.8 231.4,217.9 237.6,219.6 244.0,220.9 250.6,221.8 257.3,222.3 264.1,222.3 270.9,221.9 277.6,221.1 284.3,219.9 290.8,218.2 297.2,216.2 303.3,213.8 309.2,211.0 314.7,207.9 319.9,204.4 324.6,200.7 329.0,196.7 332.8,192.5 336.1,188.1 339.0,183.5" fill="none" stroke="#e8e8e8" stroke-width="1.3" opacity="1"/><polyline points="223.0,64.7 390.9,116.3 307.1,240.9 133.7,199.6" fill="none" stroke="#f83a12" stroke-width="1.4" stroke-dasharray="1.3 1.7" opacity="1"/><polyline points="223.0,64.7 229.8,121.7" fill="none" stroke="#f83a12" stroke-width="1.4" stroke-dasharray="1.3 1.7" opacity="1"/><polyline points="133.7,199.6 140.6,256.6" fill="none" stroke="#f83a12" stroke-width="1.4" stroke-dasharray="1.3 1.7" opacity="1"/><polyline points="390.9,116.3 397.7,173.3" fill="none" stroke="#e03010" stroke-width="1.3" opacity="1"/><polyline points="307.1,240.9 314.0,297.9" fill="none" stroke="#e03010" stroke-width="1.3" opacity="1"/><polyline points="234.6,45.1 241.0,102.0" fill="none" stroke="#f83a12" stroke-width="1.4" stroke-dasharray="1.3 1.7" opacity="1"/><polyline points="235.5,45.5 242.0,71.0 251.0,138.0" fill="none" stroke="#f83a12" stroke-width="1.4" stroke-dasharray="1.3 1.7" opacity="1"/><polygon points="230.5,122.9 286.0,114.4 320.6,144.4 299.7,182.8 244.1,191.2 209.6,161.3" fill="none" stroke="#f83a12" stroke-width="1.4" stroke-dasharray="1.3 1.7" opacity="1"/><polyline points="230.5,122.9 234.7,158.1" fill="none" stroke="#f83a12" stroke-width="1.3" stroke-dasharray="1.3 1.7" opacity="1"/><polyline points="286.0,114.4 290.3,149.7" fill="none" stroke="#f83a12" stroke-width="1.3" stroke-dasharray="1.3 1.7" opacity="1"/><polyline points="320.6,144.4 324.8,179.6" fill="none" stroke="#f83a12" stroke-width="1.3" stroke-dasharray="1.3 1.7" opacity="1"/><polyline points="299.7,182.8 303.9,218.0" fill="none" stroke="#f83a12" stroke-width="1.3" stroke-dasharray="1.3 1.7" opacity="1"/><polyline points="244.1,191.2 248.3,226.4" fill="none" stroke="#f83a12" stroke-width="1.3" stroke-dasharray="1.3 1.7" opacity="1"/><polyline points="209.6,161.3 213.8,196.5" fill="none" stroke="#f83a12" stroke-width="1.3" stroke-dasharray="1.3 1.7" opacity="1"/><polyline points="244.0,160.3 244.6,158.7 244.7,157.1 244.3,155.6 243.4,154.2 242.1,152.9 240.4,151.9 238.5,151.3 236.3,151.0 234.1,151.0 231.9,151.4 229.8,152.1 228.0,153.2 226.5,154.4 225.5,155.9 224.9,157.5 224.8,159.1 225.2,160.6 226.0,162.1 227.4,163.3 229.0,164.3 231.0,164.9 233.2,165.3 235.4,165.2 237.6,164.8 239.6,164.1 241.4,163.1 242.9,161.8 244.0,160.3" fill="none" stroke="#86e486" stroke-width="2.0" stroke-dasharray="2 1" opacity="1"/><polyline points="233.6,137.4 235.1,139.2 235.9,141.0 235.5,142.8 234.5,144.6 233.4,146.4 233.1,148.2 233.9,150.1 235.4,151.9 236.8,153.7 237.6,155.5 237.3,157.3 236.2,159.1" fill="none" stroke="#08d4e2" stroke-width="1.6" opacity="1"/><polyline points="236.0,158.1 236.1,158.5 235.9,159.0 235.4,159.4 234.7,159.6 233.9,159.6 233.2,159.3 232.6,158.8 232.2,158.1 232.3,157.3 232.8,156.6 233.6,156.0 234.7,155.7 236.0,155.8 237.1,156.3 238.0,157.1 238.4,158.1 238.2,159.2 237.5,160.3 236.3,161.0 234.7,161.4 233.0,161.3 231.5,160.6 230.4,159.5 229.9,158.1" fill="none" stroke="#08d4e2" stroke-width="1.6" opacity="1"/><polyline points="241.4,138.6 242.0,137.0 242.1,135.4 241.7,133.8 240.8,132.4 239.5,131.2 237.8,130.2 235.9,129.5 233.7,129.2 231.5,129.3 229.3,129.7 227.2,130.4 225.4,131.4 223.9,132.7 222.9,134.2 222.3,135.7 222.2,137.3 222.6,138.9 223.4,140.3 224.8,141.6 226.4,142.5 228.4,143.2 230.6,143.5 232.8,143.5 235.0,143.1 237.0,142.3 238.8,141.3 240.3,140.0 241.4,138.6" fill="none" stroke="#86e486" stroke-width="2.2" opacity="1"/><rect x="229.1" y="133.4" width="6" height="6" fill="#fff"/><rect x="231.1" y="134.4" width="2" height="1" fill="#e04020"/><rect x="231.1" y="137.4" width="2" height="1" fill="#e04020"/><polyline points="299.5,151.9 300.1,150.3 300.2,148.7 299.8,147.1 298.9,145.7 297.6,144.5 295.9,143.5 294.0,142.8 291.8,142.5 289.6,142.5 287.4,142.9 285.3,143.7 283.5,144.7 282.1,146.0 281.0,147.5 280.4,149.0 280.3,150.6 280.7,152.2 281.6,153.6 282.9,154.8 284.6,155.8 286.5,156.5 288.7,156.8 290.9,156.8 293.1,156.4 295.2,155.6 297.0,154.6 298.4,153.3 299.5,151.9" fill="none" stroke="#86e486" stroke-width="2.0" stroke-dasharray="2 1" opacity="1"/><polyline points="289.2,128.9 290.6,130.7 291.4,132.5 291.1,134.3 290.0,136.2 289.0,138.0 288.7,139.8 289.4,141.6 290.9,143.4 292.4,145.2 293.1,147.0 292.8,148.8 291.8,150.7" fill="none" stroke="#08d4e2" stroke-width="1.6" opacity="1"/><polyline points="291.6,149.7 291.6,150.1 291.4,150.5 290.9,150.9 290.3,151.1 289.5,151.1 288.7,150.9 288.1,150.3 287.8,149.7 287.8,148.9 288.3,148.1 289.1,147.6 290.3,147.3 291.5,147.4 292.6,147.8 293.5,148.6 293.9,149.7 293.8,150.8 293.1,151.8 291.8,152.6 290.3,152.9 288.6,152.8 287.0,152.1 285.9,151.0 285.4,149.7" fill="none" stroke="#08d4e2" stroke-width="1.6" opacity="1"/><polyline points="296.9,130.1 297.5,128.5 297.6,126.9 297.2,125.4 296.3,123.9 295.0,122.7 293.3,121.7 291.4,121.1 289.2,120.8 287.0,120.8 284.8,121.2 282.7,121.9 280.9,123.0 279.5,124.2 278.4,125.7 277.8,127.3 277.7,128.9 278.1,130.4 279.0,131.9 280.3,133.1 282.0,134.1 283.9,134.7 286.1,135.1 288.3,135.0 290.5,134.6 292.6,133.9 294.4,132.9 295.8,131.6 296.9,130.1" fill="none" stroke="#86e486" stroke-width="2.2" opacity="1"/><rect x="284.7" y="124.9" width="6" height="6" fill="#fff"/><rect x="286.7" y="125.9" width="2" height="1" fill="#e04020"/><rect x="286.7" y="128.9" width="2" height="1" fill="#e04020"/><polyline points="334.1,181.8 334.7,180.2 334.8,178.6 334.4,177.1 333.5,175.6 332.2,174.4 330.5,173.4 328.6,172.8 326.4,172.4 324.2,172.5 322.0,172.9 319.9,173.6 318.1,174.6 316.6,175.9 315.6,177.4 315.0,179.0 314.9,180.6 315.3,182.1 316.1,183.6 317.5,184.8 319.1,185.8 321.1,186.4 323.3,186.7 325.5,186.7 327.7,186.3 329.7,185.6 331.5,184.5 333.0,183.3 334.1,181.8" fill="none" stroke="#86e486" stroke-width="2.0" stroke-dasharray="2 1" opacity="1"/><polyline points="323.7,158.8 325.2,160.7 326.0,162.5 325.6,164.3 324.6,166.1 323.5,167.9 323.2,169.7 324.0,171.5 325.5,173.3 326.9,175.2 327.7,177.0 327.4,178.8 326.3,180.6" fill="none" stroke="#08d4e2" stroke-width="1.6" opacity="1"/><polyline points="326.1,179.6 326.2,180.0 326.0,180.5 325.5,180.8 324.8,181.1 324.0,181.1 323.3,180.8 322.7,180.3 322.3,179.6 322.4,178.8 322.9,178.1 323.7,177.5 324.8,177.2 326.1,177.3 327.2,177.8 328.1,178.6 328.5,179.6 328.3,180.7 327.6,181.8 326.4,182.5 324.8,182.9 323.1,182.7 321.6,182.1 320.5,181.0 320.0,179.6" fill="none" stroke="#08d4e2" stroke-width="1.6" opacity="1"/><polyline points="331.5,160.0 332.1,158.5 332.2,156.9 331.8,155.3 330.9,153.9 329.6,152.7 327.9,151.7 326.0,151.0 323.8,150.7 321.6,150.7 319.4,151.1 317.3,151.9 315.5,152.9 314.0,154.2 313.0,155.6 312.4,157.2 312.3,158.8 312.7,160.4 313.5,161.8 314.9,163.0 316.5,164.0 318.5,164.7 320.7,165.0 322.9,164.9 325.1,164.6 327.1,163.8 328.9,162.8 330.4,161.5 331.5,160.0" fill="none" stroke="#86e486" stroke-width="2.2" opacity="1"/><rect x="319.2" y="154.8" width="6" height="6" fill="#fff"/><rect x="321.2" y="155.8" width="2" height="1" fill="#e04020"/><rect x="321.2" y="158.8" width="2" height="1" fill="#e04020"/><polyline points="313.1,220.2 313.7,218.6 313.8,217.0 313.4,215.5 312.6,214.0 311.2,212.8 309.6,211.8 307.6,211.2 305.4,210.8 303.2,210.9 301.0,211.3 299.0,212.0 297.2,213.0 295.7,214.3 294.6,215.8 294.0,217.4 293.9,219.0 294.3,220.5 295.2,221.9 296.5,223.2 298.2,224.2 300.1,224.8 302.3,225.1 304.5,225.1 306.7,224.7 308.8,224.0 310.6,222.9 312.1,221.7 313.1,220.2" fill="none" stroke="#86e486" stroke-width="2.0" stroke-dasharray="2 1" opacity="1"/><polyline points="302.8,197.2 304.3,199.0 305.0,200.9 304.7,202.7 303.6,204.5 302.6,206.3 302.3,208.1 303.0,209.9 304.5,211.7 306.0,213.5 306.7,215.4 306.4,217.2 305.4,219.0" fill="none" stroke="#08d4e2" stroke-width="1.6" opacity="1"/><polyline points="305.2,218.0 305.2,218.4 305.0,218.9 304.5,219.2 303.9,219.5 303.1,219.5 302.3,219.2 301.7,218.7 301.4,218.0 301.4,217.2 301.9,216.5 302.8,215.9 303.9,215.6 305.1,215.7 306.3,216.1 307.1,216.9 307.5,218.0 307.4,219.1 306.7,220.2 305.4,220.9 303.9,221.3 302.2,221.1 300.7,220.5 299.5,219.4 299.0,218.0" fill="none" stroke="#08d4e2" stroke-width="1.6" opacity="1"/><polyline points="310.5,198.4 311.1,196.9 311.2,195.3 310.8,193.7 310.0,192.3 308.6,191.0 307.0,190.1 305.0,189.4 302.8,189.1 300.6,189.1 298.4,189.5 296.4,190.3 294.6,191.3 293.1,192.6 292.0,194.0 291.4,195.6 291.3,197.2 291.7,198.8 292.6,200.2 293.9,201.4 295.6,202.4 297.5,203.1 299.7,203.4 301.9,203.3 304.1,202.9 306.2,202.2 308.0,201.2 309.5,199.9 310.5,198.4" fill="none" stroke="#86e486" stroke-width="2.2" opacity="1"/><rect x="298.3" y="193.2" width="6" height="6" fill="#fff"/><rect x="300.3" y="194.2" width="2" height="1" fill="#e04020"/><rect x="300.3" y="197.2" width="2" height="1" fill="#e04020"/><polyline points="257.6,228.6 258.2,227.1 258.3,225.5 257.9,223.9 257.0,222.5 255.7,221.3 254.0,220.3 252.1,219.6 249.9,219.3 247.7,219.3 245.5,219.7 243.4,220.5 241.6,221.5 240.2,222.8 239.1,224.2 238.5,225.8 238.4,227.4 238.8,229.0 239.7,230.4 241.0,231.6 242.7,232.6 244.6,233.3 246.8,233.6 249.0,233.6 251.2,233.2 253.3,232.4 255.1,231.4 256.5,230.1 257.6,228.6" fill="none" stroke="#86e486" stroke-width="2.0" stroke-dasharray="2 1" opacity="1"/><polyline points="247.2,205.7 248.7,207.5 249.5,209.3 249.2,211.1 248.1,212.9 247.1,214.8 246.7,216.6 247.5,218.4 249.0,220.2 250.5,222.0 251.2,223.8 250.9,225.6 249.8,227.4" fill="none" stroke="#08d4e2" stroke-width="1.6" opacity="1"/><polyline points="249.7,226.4 249.7,226.9 249.5,227.3 249.0,227.7 248.3,227.9 247.6,227.9 246.8,227.6 246.2,227.1 245.9,226.4 245.9,225.7 246.4,224.9 247.2,224.3 248.3,224.1 249.6,224.1 250.7,224.6 251.6,225.4 252.0,226.4 251.9,227.6 251.1,228.6 249.9,229.4 248.3,229.7 246.7,229.6 245.1,228.9 244.0,227.8 243.5,226.4" fill="none" stroke="#08d4e2" stroke-width="1.6" opacity="1"/><polyline points="255.0,206.9 255.6,205.3 255.7,203.7 255.3,202.2 254.4,200.7 253.1,199.5 251.4,198.5 249.5,197.9 247.3,197.5 245.1,197.6 242.9,198.0 240.8,198.7 239.0,199.7 237.6,201.0 236.5,202.5 235.9,204.1 235.8,205.7 236.2,207.2 237.1,208.7 238.4,209.9 240.1,210.9 242.0,211.5 244.2,211.8 246.4,211.8 248.6,211.4 250.7,210.7 252.5,209.6 253.9,208.4 255.0,206.9" fill="none" stroke="#86e486" stroke-width="2.2" opacity="1"/><rect x="242.7" y="201.7" width="6" height="6" fill="#fff"/><rect x="244.7" y="202.7" width="2" height="1" fill="#e04020"/><rect x="244.7" y="205.7" width="2" height="1" fill="#e04020"/><polyline points="223.0,198.7 223.6,197.1 223.7,195.5 223.3,194.0 222.5,192.5 221.1,191.3 219.5,190.3 217.5,189.7 215.3,189.4 213.1,189.4 210.9,189.8 208.9,190.5 207.1,191.6 205.6,192.8 204.5,194.3 203.9,195.9 203.8,197.5 204.2,199.0 205.1,200.5 206.4,201.7 208.1,202.7 210.0,203.3 212.2,203.7 214.4,203.6 216.6,203.2 218.7,202.5 220.5,201.5 222.0,200.2 223.0,198.7" fill="none" stroke="#86e486" stroke-width="2.0" stroke-dasharray="2 1" opacity="1"/><polyline points="212.7,175.8 214.2,177.6 214.9,179.4 214.6,181.2 213.5,183.0 212.5,184.8 212.2,186.6 212.9,188.4 214.4,190.3 215.9,192.1 216.6,193.9 216.3,195.7 215.3,197.5" fill="none" stroke="#08d4e2" stroke-width="1.6" opacity="1"/><polyline points="215.1,196.5 215.1,196.9 214.9,197.4 214.4,197.8 213.8,198.0 213.0,198.0 212.2,197.7 211.6,197.2 211.3,196.5 211.3,195.7 211.8,195.0 212.7,194.4 213.8,194.1 215.0,194.2 216.2,194.7 217.0,195.5 217.4,196.5 217.3,197.6 216.6,198.7 215.3,199.4 213.8,199.8 212.1,199.6 210.6,199.0 209.4,197.9 208.9,196.5" fill="none" stroke="#08d4e2" stroke-width="1.6" opacity="1"/><polyline points="220.4,177.0 221.0,175.4 221.1,173.8 220.7,172.2 219.9,170.8 218.5,169.6 216.9,168.6 214.9,167.9 212.7,167.6 210.5,167.7 208.3,168.0 206.3,168.8 204.5,169.8 203.0,171.1 201.9,172.6 201.3,174.1 201.2,175.7 201.6,177.3 202.5,178.7 203.8,179.9 205.5,180.9 207.4,181.6 209.6,181.9 211.8,181.9 214.0,181.5 216.1,180.7 217.9,179.7 219.4,178.4 220.4,177.0" fill="none" stroke="#86e486" stroke-width="2.2" opacity="1"/><rect x="208.2" y="171.8" width="6" height="6" fill="#fff"/><rect x="210.2" y="172.8" width="2" height="1" fill="#e04020"/><rect x="210.2" y="175.8" width="2" height="1" fill="#e04020"/><polygon points="266.7,161.3 271.7,170.3 261.7,170.3" fill="none" stroke="#ff2a10" stroke-width="1.8"/><path d="M244.4 106.3 L240.8 101.5 L246.5 99.5" fill="none" stroke="#e8b800" stroke-width="1.3"/><path d="M233.2 127.0 L229.9 122.0 L235.4 119.7" fill="none" stroke="#e8b800" stroke-width="1.3"/><path d="M245.3 136.1 L251.0 138.0 L247.0 142.5" fill="none" stroke="#e8b800" stroke-width="1.3"/><path d="M136.8 250.8 L139.0 256.4 L133.6 258.9" fill="none" stroke="#e8b800" stroke-width="1.3"/><path d="M119.7 318.6 L116.4 313.6 L122.0 311.4" fill="none" stroke="#e8b800" stroke-width="1.3"/><path d="M122.9 341.1 L119.9 335.9 L125.5 333.8" fill="none" stroke="#e8b800" stroke-width="1.3"/><path d="M308.9 290.4 L312.8 295.0 L308.9 299.6" fill="none" stroke="#e8b800" stroke-width="1.3"/><path d="M391.5 175.3 L397.1 173.1 L400.5 178.1" fill="none" stroke="#e8b800" stroke-width="1.3"/></svg></div>
</body></html>
